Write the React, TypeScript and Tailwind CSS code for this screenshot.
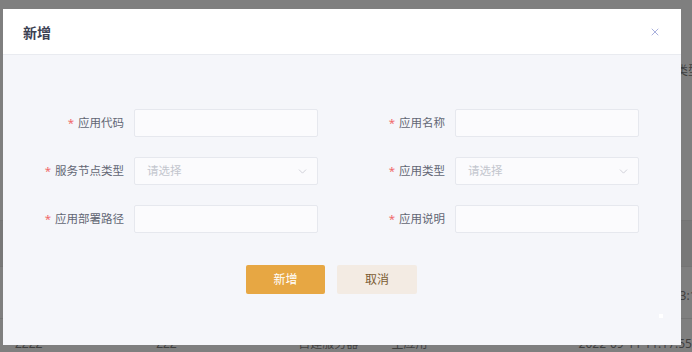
import { ChevronDown, X } from 'lucide-react';

const FONT = { fontFamily: '"Noto Sans", "Noto Sans CJK SC", sans-serif' };

interface Field {
  label: string;
  select?: boolean;
}

const ROWS: [Field, Field][] = [
  [{ label: '应用代码' }, { label: '应用名称' }],
  [{ label: '服务节点类型', select: true }, { label: '应用类型', select: true }],
  [{ label: '应用部署路径' }, { label: '应用说明' }],
];

function FormItem({ field }: { field: Field }) {
  return (
    <div className="flex items-center">
      <label className="w-[96px] pr-[10px] text-right text-[11.5px] text-[#626674] whitespace-nowrap">
        <span className="text-[#f06a6a] mr-[4px]">*</span>
        {field.label}
      </label>
      {field.select ? (
        <div className="w-[184px] h-[28px] bg-[#fbfbfd] border border-[#e6e8ee] rounded-[2px] flex items-center justify-between pl-[12px] pr-[8px]">
          <span className="text-[11.5px] text-[#c3c6ce]">请选择</span>
          <ChevronDown className="w-[13px] h-[13px] text-[#c6c8d0]" strokeWidth={1.5} />
        </div>
      ) : (
        <div className="w-[184px] h-[28px] bg-[#fbfbfd] border border-[#e6e8ee] rounded-[2px]" />
      )}
    </div>
  );
}

export default function App() {
  return (
    <div className="relative w-[692px] h-[352px] overflow-hidden bg-[#7f7f7f]" style={FONT}>
      {/* page behind the mask */}
      <div className="flex flex-col text-[12px] text-[#3f3f3f]">
        <div className="h-[62px]" />
        <div className="pl-[676px] whitespace-nowrap">类型</div>
        <div className="h-[140px]" />
        <div className="h-[46px] bg-[#787878] border-t border-[#747474]" />
        <div className="h-[52px] border-t border-[#747474] flex items-center pl-[590px] pt-[6px] whitespace-nowrap">2022-09-11 11:13:15</div>
        <div className="h-[32px] border-t border-[#747474] flex items-center whitespace-nowrap pt-[18px]">
          <span className="pl-[15px] w-[159px]">ZZZZ</span>
          <span className="w-[145px]">ZZZ</span>
          <span className="w-[95px]">自建服务器</span>
          <span className="w-[191px]">主应用</span>
          <span>2022-09-11 11:17:55</span>
        </div>
      </div>

      {/* dialog */}
      <div className="absolute left-[3px] top-[9px] w-[678px] h-[336px] bg-[#f5f6fa] flex flex-col">
        <div className="h-[46px] bg-white border-b border-[#e9ebf0] flex items-center justify-between pl-[20px] pr-[20px] pt-[1px]">
          <h3 className="text-[14px] font-bold text-[#3c4152]">新增</h3>
          <X className="w-[12px] h-[12px] text-[#8c96d2]" strokeWidth={1.5} />
        </div>

        <div className="flex flex-col gap-[20px] pt-[54px] pl-[35px]">
          {ROWS.map((row, i) => (
            <div key={i} className="flex gap-[41px]">
              <FormItem field={row[0]} />
              <FormItem field={row[1]} />
            </div>
          ))}
        </div>

        <div className="flex gap-[12px] pl-[243px] pt-[32px]">
          <button className="w-[79px] h-[29px] rounded-[2px] bg-[#e7a743] text-white text-[12px]">新增</button>
          <button className="w-[80px] h-[29px] rounded-[2px] bg-[#f3ebe3] text-[#7b5c33] text-[12px]">取消</button>
        </div>

        <div className="absolute left-[656px] top-[305px] w-[4px] h-[4px] bg-white" />
      </div>
    </div>
  );
}
